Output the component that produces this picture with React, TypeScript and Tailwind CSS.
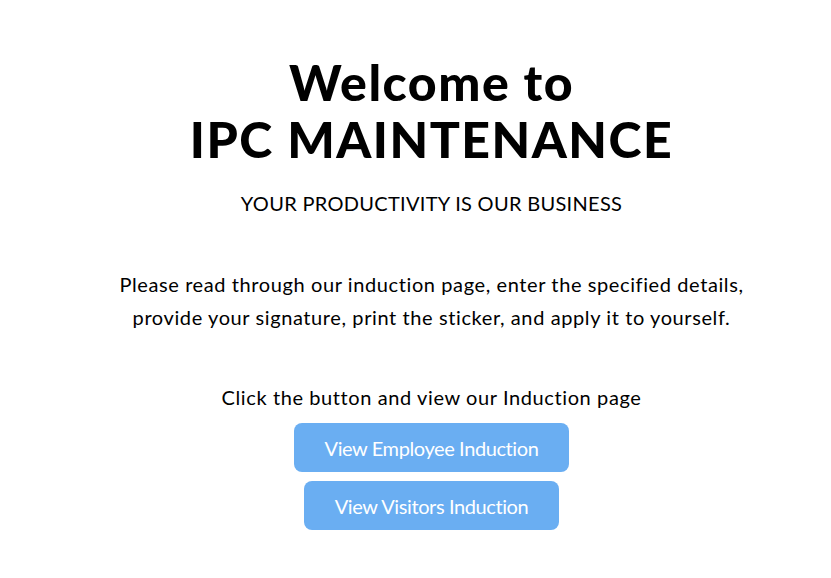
import React from 'react';

function App() {
  return (
    <div
      className="min-h-screen bg-white flex flex-col items-center pt-[54px] pl-[32px] text-black"
      style={{ fontFamily: 'Lato, "Noto Sans", sans-serif' }}
    >
      <h1 className="text-[50px] leading-[57px] font-black tracking-[1.5px] text-center">
        Welcome to
        <br />
        IPC MAINTENANCE
      </h1>
      <p className="mt-[21px] text-[20px] leading-[28px] tracking-[0.3px] text-center">
        YOUR PRODUCTIVITY IS OUR BUSINESS
      </p>

      <p className="mt-[51px] text-[20px] leading-[33px] tracking-[0.6px] text-center">
        Please read through our induction page, enter the specified details,
        <br />
        provide your signature, print the sticker, and apply it to yourself.
      </p>

      <p className="mt-[49px] text-[20px] leading-[28px] tracking-[0.6px] text-center">
        Click the button and view our Induction page
      </p>

      <div className="mt-[12px] flex flex-col items-center gap-[9px]">
        <button className="h-[49px] px-[31px] rounded-[8px] bg-[#6aaef2] text-white text-[20px] tracking-[-0.4px]">
          View Employee Induction
        </button>
        <button className="h-[49px] px-[31px] rounded-[8px] bg-[#6aaef2] text-white text-[20px] tracking-[-0.4px]">
          View Visitors Induction
        </button>
      </div>
    </div>
  );
}

export default App;
